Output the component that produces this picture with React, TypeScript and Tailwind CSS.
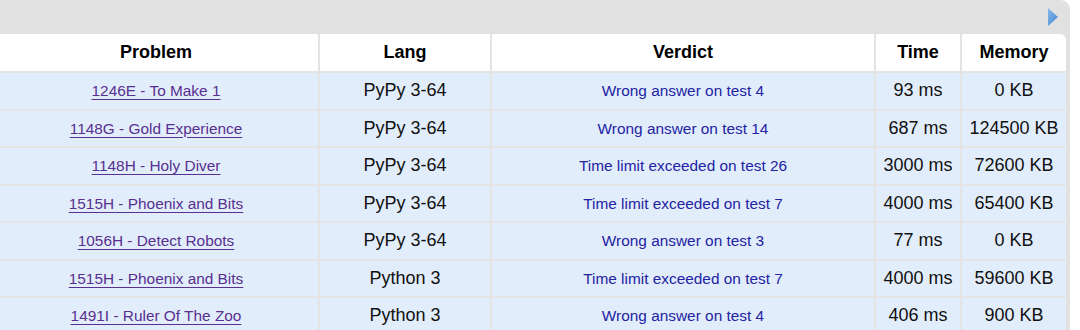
import React from "react";

type Row = { p: string; lang: string; verdict: string; time: string; mem: string };

const rows: Row[] = [
  { p: "1246E - To Make 1", lang: "PyPy 3-64", verdict: "Wrong answer on test 4", time: "93 ms", mem: "0 KB" },
  { p: "1148G - Gold Experience", lang: "PyPy 3-64", verdict: "Wrong answer on test 14", time: "687 ms", mem: "124500 KB" },
  { p: "1148H - Holy Diver", lang: "PyPy 3-64", verdict: "Time limit exceeded on test 26", time: "3000 ms", mem: "72600 KB" },
  { p: "1515H - Phoenix and Bits", lang: "PyPy 3-64", verdict: "Time limit exceeded on test 7", time: "4000 ms", mem: "65400 KB" },
  { p: "1056H - Detect Robots", lang: "PyPy 3-64", verdict: "Wrong answer on test 3", time: "77 ms", mem: "0 KB" },
  { p: "1515H - Phoenix and Bits", lang: "Python 3", verdict: "Time limit exceeded on test 7", time: "4000 ms", mem: "59600 KB" },
  { p: "1491I - Ruler Of The Zoo", lang: "Python 3", verdict: "Wrong answer on test 4", time: "406 ms", mem: "900 KB" },
];

const cols = ["w-[326px]", "w-[172px]", "w-[384px]", "w-[86px]", "w-[104px]"];

export default function App() {
  return (
    <div className="w-[1080px] h-[330px] bg-white overflow-hidden" style={{ fontFamily: '"Liberation Sans", Arial, sans-serif' }}>
      <div className="w-[1070px] h-[340px] bg-[#e1e1e1] rounded-tr-[9px] pr-[4px]">
        <div className="h-[34px] flex items-center justify-end pr-[7px]">
          <svg width="12" height="20" viewBox="0 0 12 20">
            <defs>
              <linearGradient id="tg" x1="0" y1="0" x2="1" y2="1">
                <stop offset="0" stopColor="#8ab8ea" />
                <stop offset="1" stopColor="#3f86d4" />
              </linearGradient>
            </defs>
            <polygon points="1,1 11,10 1,19" fill="url(#tg)" />
          </svg>
        </div>
        <div className="ml-[-6px] w-[1072px]">
          <div className="flex h-[37px] bg-white rounded-tr-[6px] text-[18px] font-bold text-black">
            {["Problem", "Lang", "Verdict", "Time", "Memory"].map((h, i) => (
              <div
                key={h}
                className={`${cols[i]} flex items-center justify-center ${i < 4 ? "border-r-2 border-[#e4e4e4]" : ""}`}
              >
                {h}
              </div>
            ))}
          </div>
          {rows.map((r, ri) => (
            <div key={ri} className="flex h-[37.5px] bg-[#e2edfb] border-t-2 border-[#e4e4e4]">
              <div className={`${cols[0]} flex items-center justify-center border-r-2 border-[#e4e4e4]`}>
                <a className="text-[15.4px] text-[#58308f] underline underline-offset-[3px]">{r.p}</a>
              </div>
              <div className={`${cols[1]} flex items-center justify-center border-r-2 border-[#e4e4e4] text-[18px] text-[#111]`}>
                {r.lang}
              </div>
              <div className={`${cols[2]} flex items-center justify-center border-r-2 border-[#e4e4e4] text-[15.4px] text-[#2323a3]`}>
                {r.verdict}
              </div>
              <div className={`${cols[3]} flex items-center justify-center border-r-2 border-[#e4e4e4] text-[18px] text-[#111]`}>
                {r.time}
              </div>
              <div className={`${cols[4]} flex items-center justify-center text-[18px] text-[#111]`}>
                {r.mem}
              </div>
            </div>
          ))}
        </div>
      </div>
    </div>
  );
}
